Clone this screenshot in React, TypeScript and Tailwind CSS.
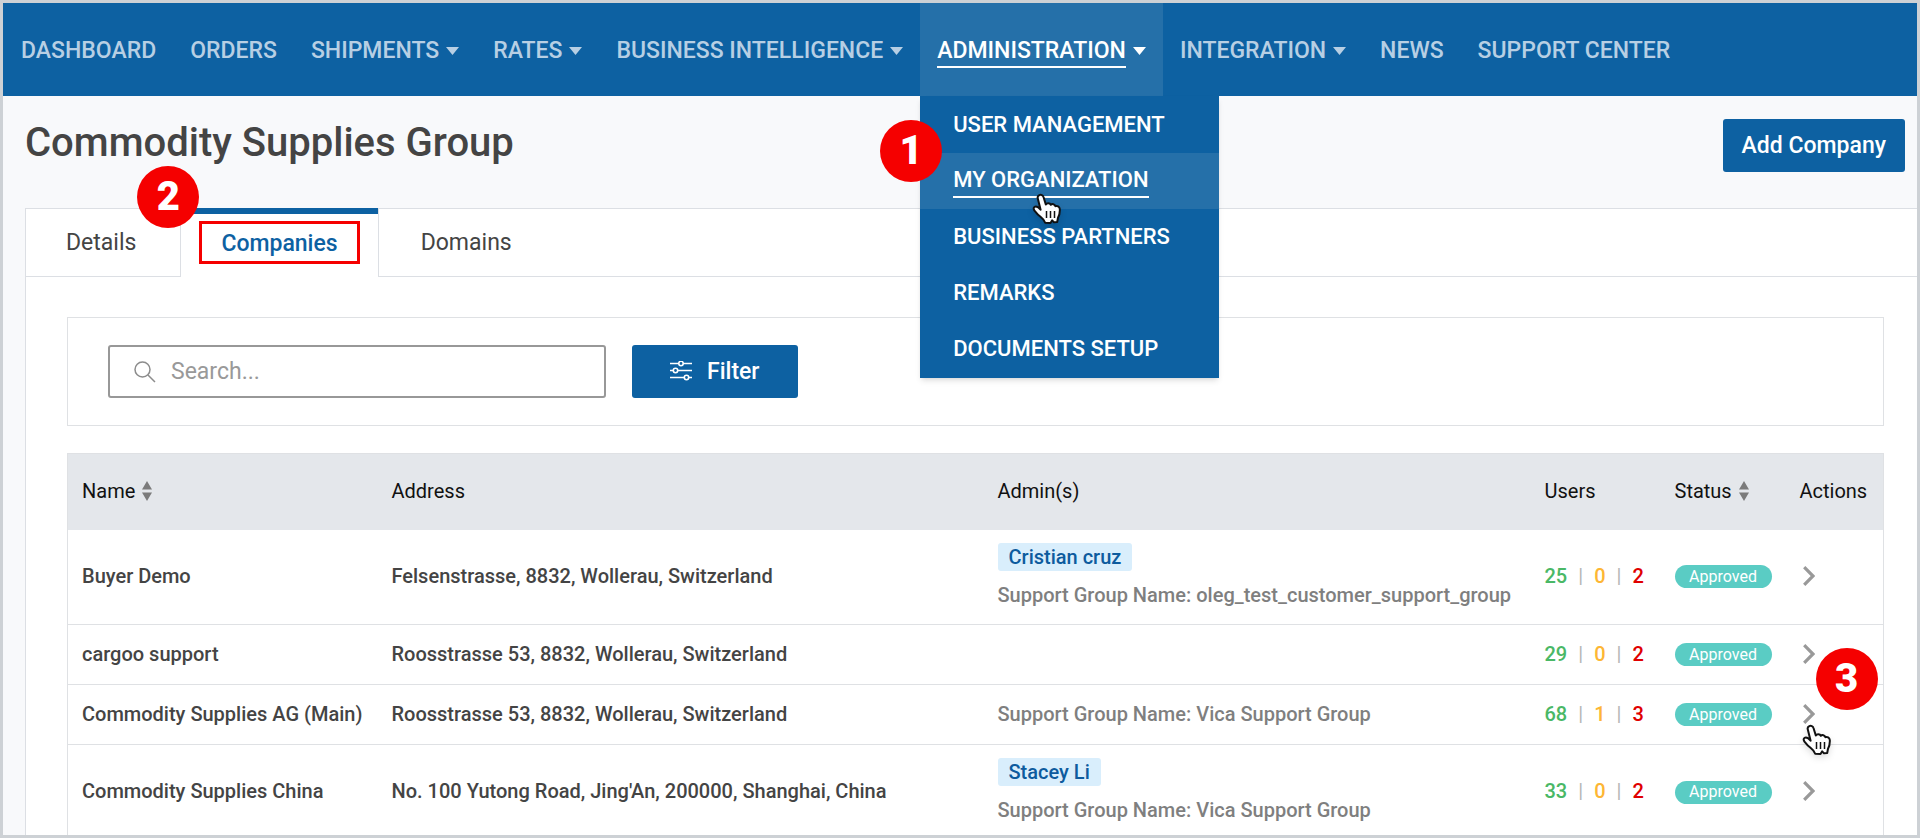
// Companies page: top navigation, organization tabs and the companies table
import { useState } from "react";

const navItems = [
  { label: "DASHBOARD", menu: false },
  { label: "ORDERS", menu: false },
  { label: "SHIPMENTS", menu: true },
  { label: "RATES", menu: true },
  { label: "BUSINESS INTELLIGENCE", menu: true },
  { label: "ADMINISTRATION", menu: true },
  { label: "INTEGRATION", menu: true },
  { label: "NEWS", menu: false },
  { label: "SUPPORT CENTER", menu: false },
];

const adminMenu = ["USER MANAGEMENT", "MY ORGANIZATION", "BUSINESS PARTNERS", "REMARKS", "DOCUMENTS SETUP"];

interface Company {
  name: string;
  address: string;
  admin?: string;
  group?: string;
  users: [number, number, number];
}

const companies: Company[] = [
  {
    name: "Buyer Demo",
    address: "Felsenstrasse, 8832, Wollerau, Switzerland",
    admin: "Cristian cruz",
    group: "oleg_test_customer_support_group",
    users: [25, 0, 2],
  },
  { name: "cargoo support", address: "Roosstrasse 53, 8832, Wollerau, Switzerland", users: [29, 0, 2] },
  {
    name: "Commodity Supplies AG (Main)",
    address: "Roosstrasse 53, 8832, Wollerau, Switzerland",
    group: "Vica Support Group",
    users: [68, 1, 3],
  },
  {
    name: "Commodity Supplies China",
    address: "No. 100 Yutong Road, Jing'An, 200000, Shanghai, China",
    admin: "Stacey Li",
    group: "Vica Support Group",
    users: [33, 0, 2],
  },
];

function Caret() {
  return (
    <svg viewBox="0 0 13 8" className="ml-[7px] h-2 w-[13px] fill-current" aria-hidden="true">
      <path d="M0 0h13L6.500 8z" />
    </svg>
  );
}

function SortIcon() {
  return (
    <svg viewBox="0 0 10 20" className="h-5 w-2.5 fill-[#7b7b7b]" aria-hidden="true">
      <path d="M5 0l5 8.500H0zM5 20l5-8.500H0z" />
    </svg>
  );
}

function StepBadge({ step, className }: { step: number; className: string }) {
  return (
    <span
      className={`absolute z-30 flex size-[62px] items-center justify-center rounded-full bg-[#f50000] text-[40px] font-black leading-none text-white ${className}`}
    >
      {step}
    </span>
  );
}

function HandCursor({ className }: { className: string }) {
  return (
    <svg viewBox="0 0 30 32" className={`absolute z-20 h-8 w-[30px] drop-shadow-md ${className}`} aria-hidden="true">
      <path
        d="M7.200 2.200C9 1.300 11 2.200 11.500 4L13.800 11.500C14.500 9.800 18 9.600 18.800 11.800C20 10.600 22.800 11 23.400 13.200C25 12.400 27.600 13.600 27.800 16C28 19.500 27.500 22 26 24.800L25.200 29L22 29.300L20.200 27.300L18.500 30L13.200 29.800C12.500 27.300 11 25.800 8.500 23.800C5.500 21.500 4 19.500 2.200 17.200C1 15.300 2 13.400 3.800 13.400C5.600 13.400 7.200 14.800 8.600 16.800L5.800 5.500C5.400 4 5.900 2.700 7.200 2.200Z"
        fill="#fff"
        stroke="#111"
        strokeWidth="2"
        strokeLinejoin="round"
      />
      <path d="M14.500 18v7M18.500 18v7M22.500 18v7" stroke="#111" strokeWidth="1.500" />
    </svg>
  );
}

function NavBar() {
  return (
    <nav className="flex h-[93px] shrink-0 bg-[#0d61a2] pl-px text-[23px] font-medium leading-[30px] text-[#b7cfe4]">
      {navItems.map((item) => {
        const active = item.label === "ADMINISTRATION";
        return (
          <div key={item.label} className={active ? "relative bg-[#2570a9] text-white" : ""}>
            <a href="#" className="flex h-full items-center whitespace-nowrap px-[17px] pt-0.5">
              <span className={active ? "border-b-2 border-white pt-0.5" : ""}>{item.label}</span>
              {item.menu && <Caret />}
            </a>
            {active && <AdminMenu />}
          </div>
        );
      })}
    </nav>
  );
}

function AdminMenu() {
  return (
    <div className="absolute left-0 top-full z-10 w-[299px] bg-[#0d61a2] py-px text-[22px] leading-8 text-white shadow-md">
      {adminMenu.map((label) => {
        const current = label === "MY ORGANIZATION";
        return (
          <a
            key={label}
            href="#"
            className={`relative flex h-14 items-center whitespace-nowrap px-[33px] ${current ? "bg-[#2570a9]" : ""}`}
          >
            <span className={current ? "border-b-2 border-white" : ""}>{label}</span>
            {current && <HandCursor className="left-28 top-10" />}
          </a>
        );
      })}
      <StepBadge step={1} className="-left-10 top-6" />
    </div>
  );
}

function Tabs() {
  return (
    <div role="tablist" className="flex text-[23px] text-[#444]">
      <button role="tab" className="h-[69px] border-y border-r border-[#dcdfe4] pl-10 pr-11 pt-0.5">
        Details
      </button>
      <button
        role="tab"
        aria-selected="true"
        className="relative flex h-[69px] items-start border-t-[6px] border-[#0d61a2] px-[18px] pt-[7px] font-medium text-[#0d61a2]"
      >
        <span className="border-[3px] border-[#f50000] px-[19px] pt-0.5 leading-[35px]">Companies</span>
        <StepBadge step={2} className="-left-11 -top-12" />
      </button>
      <div className="flex-1 border-y border-l border-[#dcdfe4]">
        <button role="tab" className="h-full px-[42px] pt-0.5">
          Domains
        </button>
      </div>
    </div>
  );
}

function SearchBar() {
  const [query, setQuery] = useState("");

  return (
    <form className="flex gap-[26px] border border-[#dfe1e4] px-10 py-[27px] text-[23px]" onSubmit={(e) => e.preventDefault()}>
      <label className="flex h-[53px] w-[498px] items-center gap-[15px] rounded-[3px] border-2 border-[#989898] px-6">
        <svg viewBox="0 0 22 22" className="size-[22px] fill-none stroke-[#8c8c8c]" strokeWidth="1.500" aria-hidden="true">
          <circle cx="8.500" cy="8.500" r="7.500" />
          <path d="M14 14l7 7" />
        </svg>
        <input
          type="text"
          aria-label="Search"
          placeholder="Search..."
          value={query}
          onChange={(e) => setQuery(e.target.value)}
          className="min-w-0 flex-1 pt-0.5 outline-none placeholder:text-[#999]"
        />
      </label>
      <button type="submit" className="flex h-[53px] items-center gap-[15px] rounded-[3px] bg-[#0d61a2] px-[38px] font-medium text-white">
        <svg viewBox="0 0 22 22" className="size-[22px] fill-[#0d61a2] stroke-white" strokeWidth="1.600" aria-hidden="true">
          <path d="M0 2.500h22M0 9.500h22M0 16.500h22" />
          <circle cx="11" cy="2.500" r="2.200" />
          <circle cx="5.500" cy="9.500" r="2.200" />
          <circle cx="16.500" cy="16.500" r="2.200" />
        </svg>
        <span className="pt-0.5">Filter</span>
      </button>
    </form>
  );
}

function CompanyRow({ company, marked }: { company: Company; marked: boolean }) {
  const [active, pending, blocked] = company.users;
  const tall = company.admin !== undefined;

  return (
    <tr className={`border-b border-[#dfe1e4] ${tall ? "h-[95px]" : "h-[60px]"}`}>
      <td className="px-[14px] pb-0.5">{company.name}</td>
      <td className="px-[14px] pb-0.5">{company.address}</td>
      <td className="px-[14px] pb-0.5 text-[#7f7f7f]">
        {company.admin && (
          <a href="#" className="mb-2.5 block w-fit rounded-[3px] bg-[#d9eefc] px-[11px] leading-7 text-[#0d5b9e]">
            {company.admin}
          </a>
        )}
        {company.group && <div className="leading-7">Support Group Name: {company.group}</div>}
      </td>
      <td className="px-[14px] pb-0.5">
        <div className="flex items-center gap-[11px]">
          <span className="text-[#4ab866]">{active}</span>
          <span className="font-normal text-[#b5b5b5]">|</span>
          <span className="text-[#fdb634]">{pending}</span>
          <span className="font-normal text-[#b5b5b5]">|</span>
          <span className="text-[#e00000]">{blocked}</span>
        </div>
      </td>
      <td className="px-[14px]">
        <span className="flex h-[23px] w-[97px] items-center justify-center rounded-full bg-[#5accc4] text-base font-normal text-white">
          Approved
        </span>
      </td>
      <td className="px-[14px] pb-0.5">
        <div className="relative">
          <button aria-label={`Open ${company.name}`} className="block px-[3px]">
            <svg viewBox="0 0 12 20" className="h-5 w-3 fill-none stroke-[#999]" strokeWidth="3.200" aria-hidden="true">
              <path d="M1.200 1.200L10 10l-8.800 8.800" />
            </svg>
          </button>
          {marked && (
            <>
              <StepBadge step={3} className="-top-14 left-4" />
              <HandCursor className="left-0.5 top-5" />
            </>
          )}
        </div>
      </td>
    </tr>
  );
}

function CompaniesTable() {
  return (
    <table className="mt-[27px] w-full table-fixed whitespace-nowrap border border-[#dfe1e4] text-left text-xl font-medium text-[#444]">
      <colgroup>
        <col className="w-[310px]" />
        <col className="w-[606px]" />
        <col />
        <col className="w-[130px]" />
        <col className="w-[125px]" />
        <col className="w-[98px]" />
      </colgroup>
      <thead className="bg-[#e4e7eb] text-[#111]">
        <tr className="h-[76px]">
          <th className="px-[14px] pb-0.5 font-normal">
            <button className="flex items-center gap-[7px]">
              Name <SortIcon />
            </button>
          </th>
          <th className="px-[14px] pb-0.5 font-normal">Address</th>
          <th className="px-[14px] pb-0.5 font-normal">Admin(s)</th>
          <th className="px-[14px] pb-0.5 font-normal">Users</th>
          <th className="px-[14px] pb-0.5 font-normal">
            <button className="flex items-center gap-[7px]">
              Status <SortIcon />
            </button>
          </th>
          <th className="px-[14px] pb-0.5 font-normal">Actions</th>
        </tr>
      </thead>
      <tbody>
        {companies.map((company) => (
          <CompanyRow key={company.name} company={company} marked={company.name.endsWith("(Main)")} />
        ))}
      </tbody>
    </table>
  );
}

export default function App() {
  return (
    <div className="flex h-screen flex-col overflow-hidden border-[3px] border-[#cdd1d5] bg-[#f8f9fb] font-['Roboto',sans-serif]">
      <NavBar />
      <header className="flex items-start justify-between pb-9 pl-[22px] pr-3 pt-[23px]">
        <h1 className="text-[40px] font-medium leading-[48px] text-[#444]">Commodity Supplies Group</h1>
        <button className="h-[53px] rounded-[3px] bg-[#0d61a2] px-[19px] pt-0.5 text-[23px] font-medium text-white">
          Add Company
        </button>
      </header>
      <main className="ml-[22px] flex-1 border-l border-[#dcdfe4] bg-white">
        <Tabs />
        <div className="pl-[41px] pr-[33px] pt-10">
          <SearchBar />
          <CompaniesTable />
        </div>
      </main>
    </div>
  );
}
